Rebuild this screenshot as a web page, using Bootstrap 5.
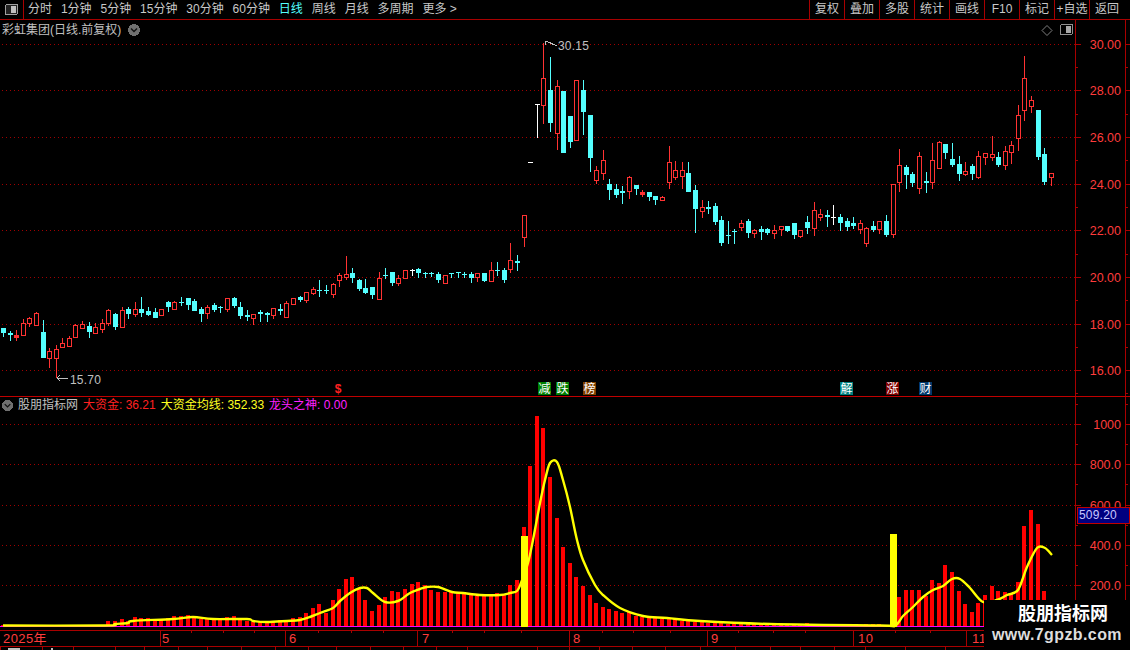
<!DOCTYPE html>
<html lang="zh">
<head>
<meta charset="utf-8">
<title>股朋指标网</title>
<link rel="stylesheet" href="https://cdn.jsdelivr.net/npm/bootstrap@5.3.0/dist/css/bootstrap.min.css">
<style>
html,body{background:#000;margin:0;height:100%;overflow:hidden}
body{font-family:"Liberation Sans","Noto Sans CJK SC",sans-serif;font-size:12px;color:#c0c0c0}
svg{display:block;shape-rendering:crispEdges}
svg text{font-family:"Liberation Sans","Noto Sans CJK SC",sans-serif;shape-rendering:auto}
.app{width:1130px;height:650px}
.tbar{height:20px;border-bottom:1px solid #a80000}
.tb-toggle{width:24px;height:19px;border-right:1px solid #a80000}
.tb-left{gap:8.9px;padding-left:4px}
.tb-btn{--bs-btn-padding-x:0;--bs-btn-padding-y:0;--bs-btn-font-size:12px;--bs-btn-line-height:19px;--bs-btn-color:#c8c8c8;--bs-btn-border-width:0;--bs-btn-border-radius:0;--bs-btn-hover-color:#fff;white-space:nowrap}
.tb-on{--bs-btn-color:#54ffff}
.tb-right{padding-right:6px}
.tb-right .tb-btn{width:35px;height:19px;border-left:1px solid #a80000}
.pane-main{height:377px;border-bottom:1px solid #c00000}
.pane-sub{height:234px;border-bottom:1px solid #a80000}
.pane-date{height:16px;border-bottom:1px solid #a80000}
.pane-title{top:2px;left:2px;gap:7px;line-height:16px}
.pane-sub .pane-title{top:0;gap:5px}
.t-red{color:#ff2020}.t-yel{color:#ffff20}.t-mag{color:#ff20ff}
.value-box{top:110px;left:1077px;width:53px;height:17px;background:#000080;border:1px solid #c00000;color:#c8c8ff;line-height:15px;font-size:12px;padding-left:1px;letter-spacing:.2px}
.brand{right:0;bottom:0;width:146px;height:50px;background:#000;z-index:5;padding-top:3px}
.brand-cn{font-size:18px;font-weight:700;color:#fff;line-height:22px;padding-left:12px}
.brand-url{font-size:16px;font-weight:700;color:#ddd;line-height:20px;letter-spacing:.4px}
</style>
</head>
<body>
<div class="app position-relative d-flex flex-column">
  <div class="tbar d-flex justify-content-between">
    <div class="d-flex">
      <div class="tb-toggle d-flex align-items-center justify-content-center">
        <svg width="13" height="11" viewBox="0 0 13 11"><rect x=".5" y=".5" width="12" height="10" rx="1.5" fill="#222" stroke="#a0a0a0"/><rect x="6" y="2" width="5" height="7" fill="#c0c0c0"/></svg>
      </div>
      <div class="tb-left d-flex">
        <button class="btn tb-btn">分时</button><button class="btn tb-btn">1分钟</button><button class="btn tb-btn">5分钟</button><button class="btn tb-btn">15分钟</button><button class="btn tb-btn">30分钟</button><button class="btn tb-btn">60分钟</button><button class="btn tb-btn tb-on">日线</button><button class="btn tb-btn">周线</button><button class="btn tb-btn">月线</button><button class="btn tb-btn">多周期</button><button class="btn tb-btn">更多 &gt;</button>
      </div>
    </div>
    <div class="tb-right d-flex">
      <button class="btn tb-btn">复权</button><button class="btn tb-btn">叠加</button><button class="btn tb-btn">多股</button><button class="btn tb-btn">统计</button><button class="btn tb-btn">画线</button><button class="btn tb-btn">F10</button><button class="btn tb-btn">标记</button><button class="btn tb-btn">+自选</button><button class="btn tb-btn">返回</button>
    </div>
  </div>

  <div class="pane-main position-relative d-flex">
    <svg id="plotA" width="1075" height="376" viewBox="0 20 1075 376"></svg>
    <svg id="axisA" width="55" height="376" viewBox="1075 20 55 376"></svg>
    <div class="pane-title position-absolute d-flex align-items-center">
      <span>彩虹集团(日线.前复权)</span>
      <svg width="12" height="12" viewBox="0 0 12 12"><circle cx="6" cy="6" r="6" fill="#707070"/><path d="M3 4.5 6 7.5 9 4.5" fill="none" stroke="#111" stroke-width="1.4" style="shape-rendering:auto"/></svg>
    </div>
  </div>

  <div class="pane-sub position-relative d-flex">
    <svg id="plotB" width="1075" height="233" viewBox="0 397 1075 233"></svg>
    <svg id="axisB" width="55" height="233" viewBox="1075 397 55 233"></svg>
    <div class="pane-title position-absolute d-flex align-items-center">
      <svg width="11" height="11" viewBox="0 0 12 12"><circle cx="6" cy="6" r="6" fill="#707070"/><path d="M3 4.5 6 7.5 9 4.5" fill="none" stroke="#111" stroke-width="1.4" style="shape-rendering:auto"/></svg>
      <span>股朋指标网</span>
      <span class="t-red">大资金: 36.21</span>
      <span class="t-yel">大资金均线: 352.33</span>
      <span class="t-mag">龙头之神: 0.00</span>
    </div>
    <div class="value-box position-absolute">509.20</div>
  </div>

  <div class="pane-date">
    <svg id="dates" width="1130" height="15" viewBox="0 631 1130 15"></svg>
  </div>
  <svg id="dayticks" width="1130" height="3" viewBox="0 647 1130 3"></svg>

  <div class="brand position-absolute text-center">
    <div class="brand-cn">股朋指标网</div>
    <div class="brand-url">www.7gpzb.com</div>
  </div>
</div>

<script src="https://cdn.jsdelivr.net/npm/bootstrap@5.3.0/dist/js/bootstrap.bundle.min.js"></script>
<script>
const RED='#ff3232',CY='#54ffff',GRID='#a00000',AX='#a80000',LAB='#ff3c3c';
const K=`c 328 328 332 336|c 331 333 334 340|r 330 335 337 340|r 319 323 335 335|r 317 318 323 326|r 312 313 325 325|c 320 332 357 357|r 348 351 358 367|r 345 349 358 377|r 338 343 347 347|r 336 338 346 346|r 324 325 337 337|r 321 324 328 328|c 322 326 331 337|r 323 327 333 333|r 319 323 329 332|r 309 310 323 325|c 313 314 326 329|r 307 310 327 327|c 307 309 313 318|r 302 309 314 316|c 297 309 312 316|c 307 311 314 315|c 308 312 317 317|r 309 309 315 315|c 301 302 306 311|r 301 302 309 309|c 297 302 302 305|c 298 298 304 309|c 299 301 310 310|c 307 309 313 321|r 305 307 313 318|c 303 305 309 311|c 306 307 307 312|r 298 298 309 311|c 297 298 305 307|c 302 307 315 318|c 310 315 316 320|r 314 314 318 324|c 310 312 313 321|c 312 313 314 321|r 308 308 315 318|c 304 309 310 314|r 301 303 317 317|r 298 298 304 304|c 296 297 299 301|r 292 292 300 302|r 287 289 293 294|c 280 290 290 296|c 285 290 290 293|r 283 284 294 297|r 273 275 280 286|r 256 274 277 279|c 268 273 277 282|c 279 280 288 290|c 279 288 292 293|c 287 287 294 298|r 272 278 299 299|c 268 275 275 278|c 272 272 282 285|r 275 278 283 285|r 270 270 278 278|w 269 270 270 275|c 268 269 272 277|c 272 273 273 277|c 272 273 273 276|c 272 274 279 282|r 275 275 283 283|c 273 273 273 277|c 272 272 272 277|c 272 274 274 277|c 272 274 277 282|r 273 273 277 281|c 273 273 280 281|r 262 270 281 281|c 262 270 270 275|c 268 270 279 282|r 243 260 269 272|c 255 261 262 270|r 215 215 237 246|w 162 162 162 162|w 104 104 104 137|r 43 78 105 123|c 57 90 122 131|r 80 86 133 149|c 91 91 152 152|c 116 116 141 147|r 80 80 140 140|c 80 90 111 134|c 115 115 157 171|r 166 170 180 183|r 150 160 173 179|c 179 184 189 199|c 184 189 194 197|c 186 191 192 203|r 176 177 191 198|c 185 185 188 194|r 190 192 194 196|c 192 192 196 200|c 196 196 199 204|r 196 197 200 200|r 146 162 182 188|r 161 170 177 179|r 162 170 176 188|c 162 173 191 191|c 185 190 208 232|r 200 207 211 217|c 201 207 208 213|c 203 206 221 224|c 216 220 242 245|c 221 235 235 243|c 229 231 231 243|r 220 223 227 230|c 219 221 232 237|r 229 230 233 237|c 226 229 231 239|c 228 229 232 234|r 225 230 233 238|r 226 226 229 235|c 226 226 230 231|c 223 223 234 238|r 230 230 236 237|c 216 222 227 233|r 202 210 228 235|r 209 214 217 220|c 210 215 216 226|w 205 217 217 224|c 214 217 222 230|c 218 221 226 230|c 217 223 225 228|r 220 223 229 233|r 227 228 243 246|c 221 226 229 231|r 221 221 229 233|c 215 221 234 236|r 184 184 234 237|r 149 165 182 191|c 165 167 174 188|c 172 174 182 186|r 152 156 188 193|c 172 181 182 192|r 143 160 182 188|r 141 142 168 168|c 144 144 152 158|c 143 159 164 166|c 156 164 173 180|r 162 171 174 175|c 164 166 173 179|r 151 156 177 178|r 153 153 157 164|r 136 154 157 160|c 152 157 164 166|r 146 151 165 169|r 141 145 152 163|r 105 115 138 150|r 56 78 110 120|r 96 100 106 112|c 110 110 156 159|c 148 154 181 184|r 173 173 177 185`.split('|').map(s=>{const p=s.split(' ');return [p[0],...p.slice(1).map(Number)]});
const V=[625,625,625,625,625,625,625,625,625,625,625,625,625,625,625,625,621,621,619,621,617,618,618,621,619,618,616,616,615,617,619,618,618,619,617,616,618,621,622,622,623,622,620,620,618,617,613,608,604,613,600,589,579,577,589,600,611,605,597,591,592,589,584,582,585,590,592,592,592,593,592,595,596,596,594,593,595,585,580,527,466,416,428,477,518,547,563,577,586,595,603,607,609,611,613,612,616,617,618,618,619,619,619,621,621,622,622,623,623,623,624,624,623,624,624,623,624,624,624,624,624,624,623,624,624,624,624,624,624,625,625,624,624,624,625,626,597,590,590,590,596,580,583,565,572,591,604,612,603,595,586,591,592,593,582,526,510,524,591];
const L=[[3,625.5],[105,625.5],[115,624],[128,623],[133,621],[173,619],[193,617],[213,619],[247,619],[253,621],[267,622],[287,621],[300,620],[310,617],[320,613],[333,608],[340,601],[350,593],[360,588],[367,588],[373,593],[385,602],[398,601],[410,593],[420,589],[427,587],[438,587],[452,592],[463,593],[480,595],[500,595],[510,593],[517,591],[521,583],[528,563],[533,540],[540,503],[545,480],[550,463],[557,462],[563,480],[570,507],[577,540],[583,560],[595,585],[603,595],[620,608],[643,616],[667,618],[700,621],[770,624],[880,625.5],[895,625.5],[903,616],[913,607],[923,597],[933,590],[943,586],[952,579],[960,579],[970,588],[983,602],[997,600],[1007,595],[1018,590],[1027,567],[1037,548],[1045,548],[1052,555]];
const col=i=>Math.floor(3.5+6.59*i);
const R=(x,y,w,h,f)=>`<rect x="${x}" y="${y}" width="${w}" height="${h}" fill="${f}"/>`;
const T=(x,y,s,f,sz=12,anc='start',ls=0)=>`<text x="${x}" y="${y}" fill="${f}" font-size="${sz}" text-anchor="${anc}" letter-spacing="${ls}">${s}</text>`;
const dots=y=>{let s='';for(let x=2;x<1075;x+=4)s+=R(x,y,1,1,GRID);return s};
/* smooth line through the sampled points (Catmull-Rom to cubic) */
const smooth=P=>{let s=`M${P[0][0]} ${P[0][1]}`;for(let i=0;i<P.length-1;i++){const a=P[Math.max(i-1,0)],b=P[i],c=P[i+1],d=P[Math.min(i+2,P.length-1)];s+=`C${(b[0]+(c[0]-a[0])/6).toFixed(1)} ${(b[1]+(c[1]-a[1])/6).toFixed(1)} ${(c[0]-(d[0]-b[0])/6).toFixed(1)} ${(c[1]-(d[1]-b[1])/6).toFixed(1)} ${c[0]} ${c[1]}`}return s};

/* price pane */
const gridA=[44,90,137,184,230,277,324,370];
let a=gridA.map(dots).join('');
K.forEach((c,i)=>{
  const x=col(i),[t,h,top,bot,low]=c;
  const f=t==='r'?RED:t==='c'?CY:'#fff';
  if(t==='r'&&bot-top>2){
    if(top>h)a+=R(x,h,1,top-h,f);
    if(low>bot)a+=R(x,bot,1,low-bot+1,f);
    a+=`<rect x="${x-2+.5}" y="${top+.5}" width="4" height="${bot-top}" fill="#000" stroke="${f}"/>`;
  }else{
    if(low>h)a+=R(x,h,1,low-h+1,f);
    a+=R(x-2,top,5,Math.max(1,bot-top+(bot>top?1:0)),f);
  }
});
a+=`<path d="M545 45V41H548M546 41 557 46" stroke="#c0c0c0" fill="none"/>`+T(558,50,'30.15','#c0c0c0',12,'start',.2);
a+=`<path d="M68 378H57M57 378 60 375M57 378 60 381" stroke="#c0c0c0" fill="none"/>`+T(70,384,'15.70','#c0c0c0',12,'start',.2);
[['减',538,'#007f00'],['跌',556,'#007f00'],['榜',583,'#804000'],['解',840,'#007f7f'],['涨',886,'#800000'],['财',919,'#00386b']].forEach(([s,x,f])=>{
  a+=R(x,382,13,13,f)+T(x+.5,393,s,'#fff',12);
});
a+=T(338,393,'$','#ff2020',12,'middle').replace('<text','<text font-weight="700"');
a+=`<path d="M1047 25.5 1052 30.5 1047 35.5 1042 30.5Z" fill="none" stroke="#808080" style="shape-rendering:auto"/>`;
a+=`<rect x="1060.5" y="24.5" width="12" height="10" rx="1.5" fill="#000" stroke="#909090"/>`+R(1066,26,5,7,'#a8a8a8');
document.getElementById('plotA').innerHTML=a;

const axis=(majors,minors,labs)=>{
  let s=`<line x1="1075.5" x2="1075.5" y1="0" y2="700" stroke="${AX}"/><line x1="1125.5" x2="1125.5" y1="0" y2="700" stroke="${AX}"/>`;
  majors.forEach(y=>s+=R(1075,y,6,1,AX)+R(1126,y,4,1,AX));
  minors.forEach(y=>s+=R(1075,y,3,1,AX)+R(1126,y,2,1,AX));
  labs.forEach(([l,y])=>s+=T(1121,y+4.5,l,LAB,12.5,'end'));
  return s;
};
document.getElementById('axisA').innerHTML=axis(gridA,[67,114,160,207,254,300,347,393],[['30.00',44],['28.00',90],['26.00',137],['24.00',184],['22.00',230],['20.00',277],['18.00',324],['16.00',370]]);

/* indicator pane */
let b=[424,464,505,545,585].map(dots).join('');
V.forEach((y,i)=>{b+=R(col(i)-2,y,4,627-y,'#ff0000')});
b+=R(0,626,1075,1,'#ff00ff');
b+=R(521,536,7,91,'#ffff00')+R(890,534,7,93,'#ffff00');
b+=`<path d="${smooth(L)}" fill="none" stroke="#ffff00" stroke-width="2.4" style="shape-rendering:auto"/>`;
document.getElementById('plotB').innerHTML=b;
document.getElementById('axisB').innerHTML=axis([424,464,505,545,585],[404,444,484,525,565,605],[['1000',424],['800.0',464],['600.0',505],['400.0',545],['200.0',585]]);

/* date axis */
let d='';
[[3,'2025年'],[162,'5'],[289,'6'],[422,'7'],[573,'8'],[711,'9'],[858,'10'],[972,'11']].forEach(([x,s])=>{d+=T(x,643,s,LAB,13,'start',.4)});
[160,285,417,569,707,853,966].forEach(x=>d+=R(x,631,1,15,AX));
[191,223,254,318,351,383,452,484,521,602,633,670,738,773,805,895,930].forEach(x=>d+=R(x,631,1,2,AX));
[1075,1125].forEach(x=>d+=R(x,631,1,15,AX));
document.getElementById('dates').innerHTML=d;
document.getElementById('dayticks').innerHTML=[0,42,73,115,144,178,207,241,275,308,336,370,403,436,467,537,569,599,632,665,700,735,770,800,834,865,905,945].map(x=>R(x,647,1,3,AX)).join('')+R(8,648,12,2,'#c0c0c0')+R(51,648,2,2,'#c0c0c0');
</script>
</body>
</html>
